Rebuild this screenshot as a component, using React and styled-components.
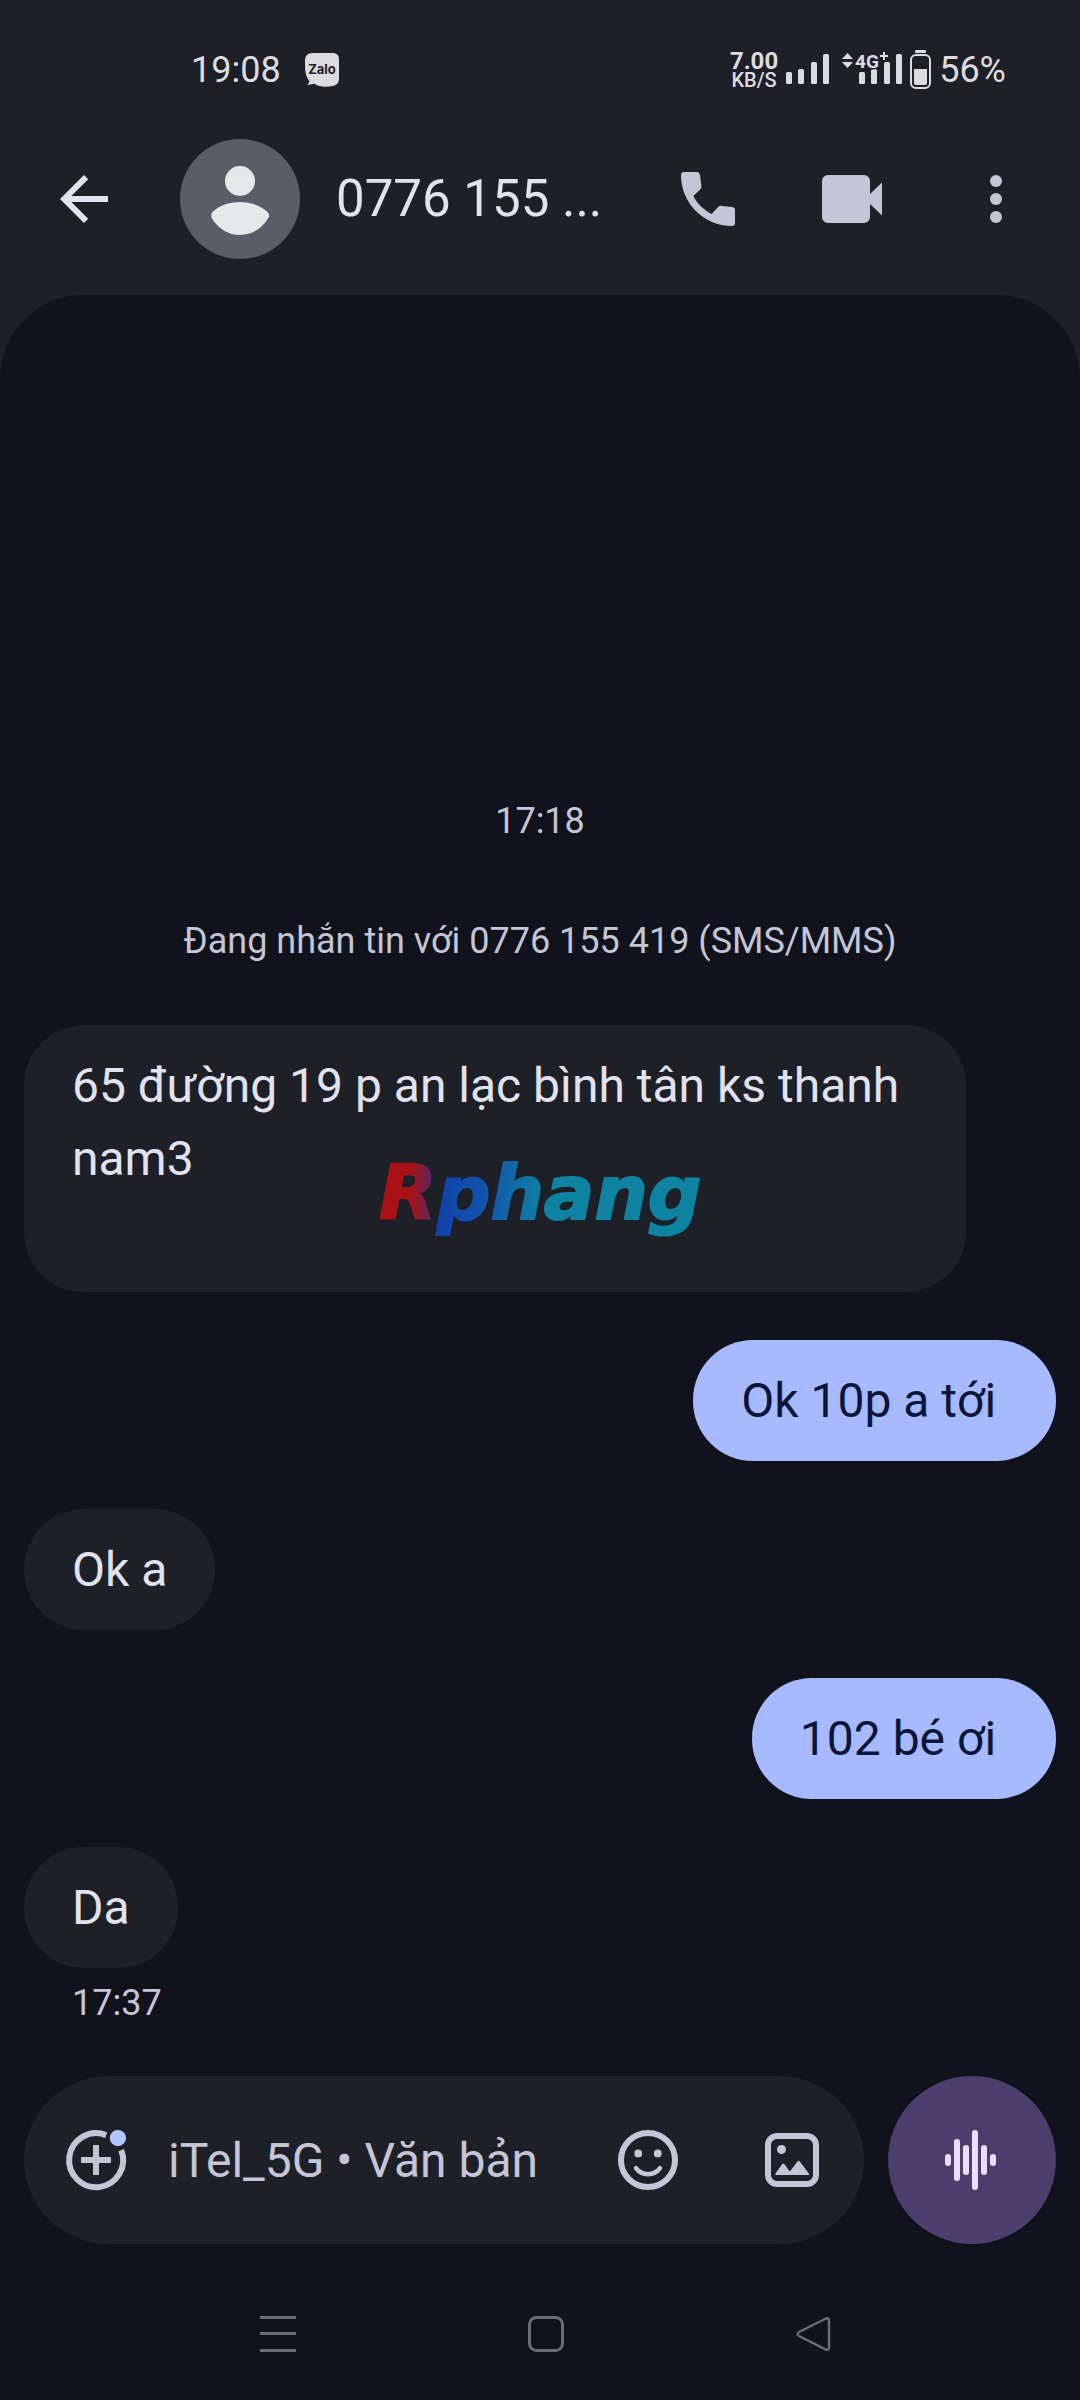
import React from 'react';
import styled, { createGlobalStyle } from 'styled-components';

const colors = {
    surface: '#1e2028',
    background: '#10131b',
    text: '#e1e2f0',
    muted: '#c4c6d7',
    outgoing: '#a7b9ff',
    outgoingText: '#0b1638',
    voice: '#4d3e6d',
    voiceIcon: '#ecdcff',
    nav: '#6b6d74',
    status: '#dcdce0'
};

const GlobalStyle = createGlobalStyle`
    * {
        box-sizing: border-box;
    }

    body {
        margin: 0;
        background: ${colors.background};
        font-family: Roboto, 'Noto Sans', sans-serif;
    }
`;

const Screen = styled.div`
    position: relative;
    display: flex;
    flex-direction: column;
    min-height: 100vh;
    background: ${colors.surface};
    color: ${colors.text};
`;

const StatusBar = styled.div`
    display: flex;
    align-items: center;
    justify-content: space-between;
    height: 103px;
    padding: 36px 74px 0 191px;
    color: ${colors.status};
    font-size: 36px;
`;

const StatusGroup = styled.div`
    display: flex;
    align-items: center;
    gap: ${props => props.$gap}px;
`;

const Speed = styled.div`
    display: flex;
    flex-direction: column;
    align-items: center;
    font-size: 24px;
    font-weight: 700;
    line-height: 20px;
`;

const SpeedUnit = styled.span`
    font-size: 20px;
    font-weight: 500;
    line-height: 18px;
`;

const AppBar = styled.header`
    display: flex;
    align-items: center;
    height: 192px;
    padding: 0 48px;
`;

const IconButton = styled.button`
    display: flex;
    flex: none;
    padding: 0;
    border: 0;
    background: none;
    color: ${props => props.$color || colors.muted};
    cursor: pointer;
`;

const Avatar = styled.div`
    display: flex;
    flex: none;
    width: 120px;
    height: 120px;
    margin: 0 36px 0 60px;
    border-radius: 50%;
    background: #5a5d67;
    color: #e6e8ea;
`;

const Title = styled.h1`
    flex: 1;
    margin: 0;
    font-size: 51px;
    font-weight: 400;
    line-height: 60px;
    white-space: nowrap;
`;

const Actions = styled.div`
    display: flex;
    gap: 72px;
`;

const Thread = styled.main`
    display: flex;
    flex: 1;
    flex-direction: column;
    justify-content: flex-end;
    gap: 48px;
    padding: 0 24px 49px;
    border-radius: 84px 84px 0 0;
    background: ${colors.background};
`;

const Notice = styled.div`
    display: flex;
    flex-direction: column;
    gap: 72px;
    padding-bottom: 12px;
    color: ${colors.muted};
    font-size: 36px;
    line-height: 48px;
    text-align: center;
`;

const Message = styled.div`
    display: flex;
    flex-direction: column;
    align-items: ${props => (props.$mine ? 'flex-end' : 'flex-start')};
`;

const Bubble = styled.div`
    max-width: 942px;
    padding: 24px 48px;
    border-radius: 60px;
    background: ${props => (props.$mine ? colors.outgoing : colors.surface)};
    color: ${props => (props.$mine ? colors.outgoingText : colors.text)};
    font-size: 48px;
    line-height: 73px;
    white-space: pre-wrap;
`;

const Time = styled.time`
    padding: 11px 48px 0;
    color: ${colors.muted};
    font-size: 36px;
    line-height: 48px;
`;

const Composer = styled.form`
    display: flex;
    gap: 24px;
    padding: 0 24px;
    background: ${colors.background};
`;

const Field = styled.div`
    display: flex;
    flex: 1;
    align-items: center;
    min-width: 0;
    height: 168px;
    padding: 0 36px;
    border-radius: 84px;
    background: ${colors.surface};
`;

const MessageInput = styled.input`
    flex: 1;
    min-width: 0;
    margin-left: 36px;
    padding: 0;
    border: 0;
    outline: none;
    background: none;
    color: ${colors.text};
    font-family: inherit;
    font-size: 48px;

    &::placeholder {
        color: ${colors.muted};
        opacity: 1;
    }
`;

const VoiceButton = styled(IconButton)`
    align-items: center;
    justify-content: center;
    width: 168px;
    height: 168px;
    border-radius: 50%;
    background: ${colors.voice};
`;

const SystemNav = styled.nav`
    display: flex;
    align-items: center;
    justify-content: center;
    gap: 232px;
    height: 156px;
    padding: 24px 0 0 12px;
    background: ${colors.background};
`;

const Watermark = styled.div`
    position: absolute;
    inset: 0;
    display: flex;
    align-items: center;
    justify-content: center;
    pointer-events: none;
`;

const WatermarkText = styled.text`
    font-family: 'DejaVu Sans', sans-serif;
    font-size: 75px;
    font-style: italic;
    font-weight: 700;
`;

const BadgeText = styled.text`
    font-family: ${props => props.$family || 'Roboto'}, sans-serif;
    font-weight: 700;
`;

const Icon = ({ size = 72, children }) => (
    <svg width={size} height={size} viewBox="0 0 24 24" fill="currentColor" aria-hidden="true">
        {children}
    </svg>
);

const ZaloIcon = () => (
    <svg width="34" height="34" viewBox="0 0 34 34" aria-hidden="true">
        <path
            fill={colors.status}
            d="M8 0h19c5 0 7 2 7 7v18c0 5-2 7-6 8-7 1.500-14 1-19-2.500-2 1-5 1.500-7 1 2-1 2.500-2 2-4C0 22 0 16 0 9c0-6 2-9 8-9z"
        />
        <BadgeText $family="Inter" x="17" y="21" fontSize="13" textAnchor="middle" fill={colors.surface}>
            Zalo
        </BadgeText>
    </svg>
);

const bars = [
    { x: 0, y: 22 },
    { x: 12, y: 19 },
    { x: 25, y: 12 },
    { x: 37, y: 4 }
];

const SignalBars = () =>
    bars.map(({ x, y }) => (
        <rect key={x} x={x} y={y} width="6" height={34 - y} rx="1.500" fill={colors.status} />
    ));

const Signal = () => (
    <svg width="48" height="40" aria-hidden="true">
        <SignalBars />
    </svg>
);

const DataSignal = () => (
    <svg width="60" height="40" fill={colors.status} aria-hidden="true">
        <path d="M0 9l5.500-6L11 9zM0 12h11l-5.500 6z" />
        <g transform="translate(17 0)">
            <SignalBars />
        </g>
        <BadgeText
            x="13"
            y="18"
            fontSize="19"
            stroke={colors.surface}
            strokeWidth="3"
            paintOrder="stroke"
        >
            4G
        </BadgeText>
        <path d="M41 2h2v3h3v2h-3v3h-2V7h-3V5h3z" />
    </svg>
);

const Battery = () => (
    <svg width="21" height="40" fill={colors.status} aria-hidden="true">
        <rect x="5" y="0" width="11" height="3" rx="1" />
        <rect x="1" y="5" width="19" height="33" rx="5" fill="none" stroke={colors.status} strokeWidth="2" />
        <path d="M4 19h13v14a2 2 0 0 1-2 2H6a2 2 0 0 1-2-2z" />
    </svg>
);

const WaveIcon = () => (
    <svg width="72" height="72" fill={colors.voiceIcon} aria-hidden="true">
        {[12, 42, 30, 60, 30, 12].map((height, i) => (
            <rect key={i} x={9 + i * 9} y={36 - height / 2} width="6" height={height} rx="3" />
        ))}
    </svg>
);

const messages = [
    { text: '65 đường 19 p an lạc bình tân ks thanh nam3\n\n' },
    { text: 'Ok 10p a tới ', mine: true },
    { text: 'Ok a' },
    { text: '102 bé ơi ', mine: true },
    { text: 'Da', time: '17:37' }
];

const App = () => (
    <>
        <GlobalStyle />
        <Screen>
            <StatusBar>
                <StatusGroup $gap={24}>
                    <span>19:08</span>
                    <ZaloIcon />
                </StatusGroup>
                <StatusGroup $gap={8}>
                    <Speed>
                        7.00
                        <SpeedUnit>KB/S</SpeedUnit>
                    </Speed>
                    <Signal />
                    <DataSignal />
                    <Battery />
                    <span>56%</span>
                </StatusGroup>
            </StatusBar>

            <AppBar>
                <IconButton type="button" aria-label="Quay lại" $color={colors.text}>
                    <Icon>
                        <path d="M20 11v2H7.800l5.600 5.600L12 20l-8-8 8-8 1.400 1.400L7.800 11z" />
                    </Icon>
                </IconButton>
                <Avatar>
                    <Icon size={120}>
                        <circle cx="12" cy="8.400" r="3" />
                        <path d="M6.400 15.900a1.300 1.300 0 0 1 0-1.200c1.300-1.300 3.300-2.100 5.600-2.100s4.300.8 5.600 2.100c.3.400.3.800 0 1.200-1.300 2.100-3.300 3.300-5.600 3.300s-4.300-1.200-5.600-3.300z" />
                    </Icon>
                </Avatar>
                <Title>0776 155 ...</Title>
                <Actions>
                    <IconButton type="button" aria-label="Gọi">
                        <Icon>
                            <path d="M4 3h4.200c.6 0 1 .4 1.100.9l.5 3.700c.1.500-.1.900-.4 1.200L7.100 11c1.500 2.700 3.400 4.600 6.100 6l2.200-2.300c.3-.3.700-.5 1.200-.4l3.500.4c.6.100.9.500.9 1V20c0 .6-.4 1-1 1C10.600 21 3 13.400 3 4c0-.6.400-1 1-1z" />
                        </Icon>
                    </IconButton>
                    <IconButton type="button" aria-label="Gọi video">
                        <Icon>
                            <path d="M4 4h12a2 2 0 0 1 2 2v4.300l4-3.800v11l-4-3.800V18a2 2 0 0 1-2 2H4a2 2 0 0 1-2-2V6a2 2 0 0 1 2-2z" />
                        </Icon>
                    </IconButton>
                    <IconButton type="button" aria-label="Thêm">
                        <Icon>
                            <circle cx="12" cy="6" r="2" />
                            <circle cx="12" cy="12" r="2" />
                            <circle cx="12" cy="18" r="2" />
                        </Icon>
                    </IconButton>
                </Actions>
            </AppBar>

            <Thread>
                <Notice>
                    <time>17:18</time>
                    <span>Đang nhắn tin với 0776 155 419 (SMS/MMS)</span>
                </Notice>
                {messages.map(({ text, mine, time }) => (
                    <Message key={text} $mine={mine}>
                        <Bubble $mine={mine}>{text}</Bubble>
                        {time && <Time>{time}</Time>}
                    </Message>
                ))}
            </Thread>

            <Composer>
                <Field>
                    <IconButton type="button" aria-label="Đính kèm">
                        <Icon>
                            <path
                                d="M15.400 3.700A9 9 0 1 0 20.400 8.700"
                                fill="none"
                                stroke="currentColor"
                                strokeWidth="2"
                            />
                            <path d="M11 7h2v4h4v2h-4v4h-2v-4H7v-2h4z" />
                            <circle cx="19.300" cy="4.700" r="2.700" fill="#b2c5ff" />
                        </Icon>
                    </IconButton>
                    <MessageInput aria-label="Tin nhắn" placeholder="iTel_5G • Văn bản" />
                    <Actions>
                        <IconButton type="button" aria-label="Biểu tượng cảm xúc">
                            <Icon>
                                <g fill="none" stroke="currentColor">
                                    <circle cx="12" cy="12" r="9" strokeWidth="2" />
                                    <path d="M8 14.700c2 2.700 6 2.700 8 0" strokeWidth="1.500" strokeLinecap="round" />
                                </g>
                                <circle cx="8.750" cy="9.800" r="1.300" />
                                <circle cx="15.250" cy="9.800" r="1.300" />
                            </Icon>
                        </IconButton>
                        <IconButton type="button" aria-label="Thư viện ảnh">
                            <Icon>
                                <rect x="4" y="4" width="16" height="16" rx="3" fill="none" stroke="currentColor" strokeWidth="2" />
                                <circle cx="8.500" cy="8.500" r="1.500" />
                                <path d="M6.500 16.500l2.200-3.100q.4-.5.800 0l1.800 2.400 2.500-3.300q.4-.5.800 0l3 4q.4.500-.2.500H6.700q-.5 0-.2-.5z" />
                            </Icon>
                        </IconButton>
                    </Actions>
                </Field>
                <VoiceButton type="button" aria-label="Ghi âm">
                    <WaveIcon />
                </VoiceButton>
            </Composer>

            <SystemNav>
                <IconButton type="button" aria-label="Ứng dụng gần đây" $color={colors.nav}>
                    <svg width="36" height="36" fill="currentColor" aria-hidden="true">
                        <path d="M0 0h36v3H0zM0 16h36v3H0zM0 33h36v3H0z" />
                    </svg>
                </IconButton>
                <IconButton type="button" aria-label="Màn hình chính" $color={colors.nav}>
                    <svg width="36" height="36" fill="none" stroke="currentColor" aria-hidden="true">
                        <rect x="1.500" y="1.500" width="33" height="33" rx="7" strokeWidth="3" />
                    </svg>
                </IconButton>
                <IconButton type="button" aria-label="Trở về" $color={colors.nav}>
                    <svg width="36" height="36" fill="none" stroke="currentColor" aria-hidden="true">
                        <path d="M30 2.500L3 16q-3 2 0 4l27 13.500q3 1 3-2v-27q0-3-3-2z" strokeWidth="2.500" />
                    </svg>
                </IconButton>
            </SystemNav>

            <Watermark>
                <svg width="360" height="110" role="img" aria-label="Rphang">
                    <defs>
                        <linearGradient id="brand" gradientUnits="userSpaceOnUse" x1="0" y1="0" x2="360" y2="0">
                            <stop offset="0.140" stopColor="#a81215" />
                            <stop offset="0.190" stopColor="#6d2150" />
                            <stop offset="0.205" stopColor="#1240a8" />
                            <stop offset="0.340" stopColor="#1253ae" />
                            <stop offset="0.520" stopColor="#0e84a2" />
                        </linearGradient>
                    </defs>
                    <WatermarkText
                        x="19"
                        y="74"
                        fill="url(#brand)"
                        stroke="url(#brand)"
                        strokeWidth="2"
                        strokeLinejoin="round"
                    >
                        Rphang
                    </WatermarkText>
                </svg>
            </Watermark>
        </Screen>
    </>
);

export default App;
